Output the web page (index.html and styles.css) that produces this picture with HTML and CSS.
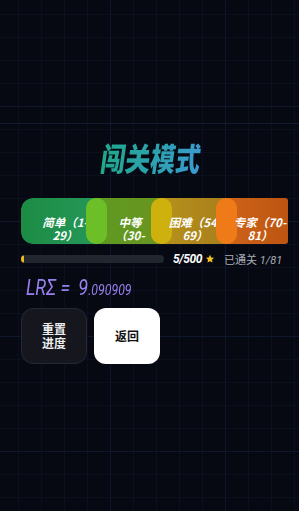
FILE: index.html
```html
<!DOCTYPE html>
<html lang="zh-CN">
<head>
  <meta charset="UTF-8">
  <meta name="viewport" content="width=device-width, initial-scale=1.0">
  <title>闯关模式</title>
  <link rel="stylesheet" href="styles.css">
</head>
<body>
  <div class="top-rule"></div>

  <h1 class="title"><span class="title-text">闯关模式</span></h1>

  <div class="content">
    <div class="tabs">
      <button class="tab tab-easy">
        <span class="tab-label"><span class="tab-line">简单（1-</span><span class="tab-line">29）</span></span>
      </button>
      <button class="tab tab-normal">
        <span class="tab-label"><span class="tab-line">中等</span><span class="tab-line">（30-</span><span class="tab-line">53）</span></span>
      </button>
      <button class="tab tab-hard">
        <span class="tab-label"><span class="tab-line">困难（54-</span><span class="tab-line">69）</span></span>
      </button>
      <button class="tab tab-expert">
        <span class="tab-label"><span class="tab-line">专家（70-</span><span class="tab-line">81）</span></span>
      </button>
    </div>

    <div class="progress-row">
      <div class="progress-track">
        <div class="progress-fill" style="width: 2%"></div>
      </div>
      <span class="star-count">5/500</span>
      <svg class="star" viewBox="0 0 24 24" width="10" height="10">
        <path d="M12 2l2.9 6.3 6.9.8-5.1 4.7 1.4 6.8L12 17.2l-6.1 3.4 1.4-6.8L2.2 9.1l6.9-.8z" fill="#f5c21b"/>
      </svg>
      <span class="cleared">已通关 <i>1/81</i></span>
    </div>

    <div class="lr">
      <span class="lr-name">LRΣ =</span>
      <span class="lr-int">9</span><span class="lr-frac">.090909</span>
    </div>

    <div class="actions">
      <button class="btn btn-dark">重置<br>进度</button>
      <button class="btn btn-light">返回</button>
    </div>
  </div>
</body>
</html>
```

FILE: styles.css
```css
* {
  margin: 0;
  padding: 0;
  box-sizing: border-box;
}

body {
  min-height: 100vh;
  font-family: Roboto, 'Noto Sans CJK SC', sans-serif;
  color: #ffffff;
  background-color: #060912;
  background-image:
    linear-gradient(to right, rgba(34, 52, 104, 0.2) 1px, transparent 1px),
    linear-gradient(to bottom, rgba(34, 52, 104, 0.2) 1px, transparent 1px),
    linear-gradient(to right, rgba(28, 40, 80, 0.2) 1px, transparent 1px),
    linear-gradient(to bottom, rgba(28, 40, 80, 0.2) 1px, transparent 1px);
  background-size: 115px 115px, 115px 115px, 23px 23px, 23px 23px;
  background-position: 110px 106px, 110px 106px, 18px 14px, 18px 14px;
}

.top-rule {
  height: 1px;
  margin-top: 123px;
  background: #111a30;
}

.title {
  margin-top: 13px;
  height: 40px;
  line-height: 40px;
  text-align: center;
  font-family: 'Noto Sans CJK SC', sans-serif;
  font-size: 32px;
  font-weight: 900;
}

.title-text {
  display: inline-block;
  transform: translateX(2px) scaleX(0.78) skewX(-10deg);
  background: linear-gradient(90deg, #1fa88a, #3a9bd0);
  -webkit-background-clip: text;
  background-clip: text;
  color: transparent;
}

.content {
  margin: 0 11px 0 21px;
}

/* difficulty tabs */
.tabs {
  display: flex;
  margin-top: 21px;
  height: 46px;
  overflow: hidden;
  border-radius: 12px 3px 3px 12px;
}

.tab {
  position: relative;
  flex: 0 0 85px;
  height: 46px;
  margin-left: -20px;
  padding-top: 15px;
  border: none;
  border-radius: 12px;
  color: #ffffff;
  font-family: 'Noto Sans CJK SC', sans-serif;
  font-size: 11.5px;
  font-weight: 700;
  font-style: italic;
  text-align: left;
  cursor: pointer;
}

.tab:first-child {
  margin-left: 0;
}

.tab::before {
  content: '';
  position: absolute;
  left: 0;
  top: 0;
  bottom: 0;
  width: 21px;
  border-radius: 10px;
  background: var(--glow);
}

.tab-label {
  position: relative;
  display: block;
  margin-left: 14px;
  width: 60px;
  height: 26px;
  overflow: hidden;
  line-height: 13px;
  text-align: center;
}

.tab-line {
  display: block;
  white-space: nowrap;
}

.tab-easy {
  --glow: transparent;
  background: linear-gradient(90deg, #1c8c44, #26985a);
}

.tab-normal {
  --glow: #6cbf27;
  background: linear-gradient(90deg, #5d9a22, #6a951f);
}

.tab-hard {
  --glow: #cfb10d;
  background: linear-gradient(90deg, #b8951a, #a67b1c);
}

.tab-expert {
  --glow: #ef7b18;
  background: linear-gradient(90deg, #d2661b, #b8520f);
}

/* progress */
.progress-row {
  display: flex;
  align-items: center;
  margin-top: 8px;
  height: 14px;
}

.progress-track {
  width: 143px;
  height: 8px;
  border-radius: 4px;
  background: #22262f;
  overflow: hidden;
}

.progress-fill {
  height: 100%;
  border-radius: 4px;
  background: #e9b91e;
}

.star-count {
  margin-left: 9px;
  font-size: 12px;
  font-weight: 700;
  font-style: italic;
  letter-spacing: -0.4px;
}

.star {
  margin-left: 3px;
}

.cleared {
  margin-left: 9px;
  font-size: 11px;
  color: #a9adb6;
}

/* LR value */
.lr {
  display: flex;
  align-items: baseline;
  margin-top: 10px;
  height: 24px;
  line-height: 24px;
  padding-left: 6px;
  color: #9a80ee;
  font-style: italic;
  transform: scaleX(0.82);
  transform-origin: left center;
}

.lr-name {
  font-size: 22px;
}

.lr-int {
  margin-left: 10px;
  font-size: 22px;
}

.lr-frac {
  font-size: 15px;
}

/* buttons */
.actions {
  display: flex;
  gap: 7px;
  margin-top: 8px;
}

.btn {
  width: 66px;
  height: 56px;
  border-radius: 12px;
  font-family: 'Noto Sans CJK SC', sans-serif;
  font-size: 12px;
  font-weight: 700;
  line-height: 14px;
  cursor: pointer;
}

.btn-dark {
  background: #15161e;
  border: 1px solid #262833;
  color: #eeeeee;
}

.btn-light {
  background: #ffffff;
  border: none;
  color: #111111;
}
```
